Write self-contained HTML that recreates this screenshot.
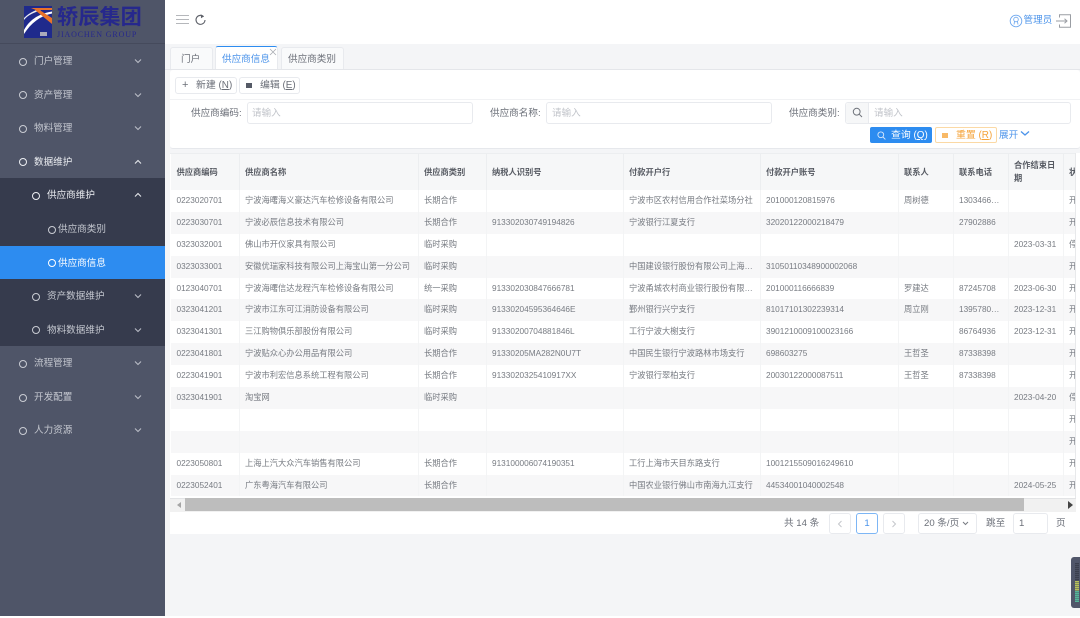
<!DOCTYPE html>
<html lang="zh"><head><meta charset="utf-8"><title>供应商信息</title>
<style>
*{box-sizing:border-box}
html,body{margin:0;padding:0;width:1080px;height:618px;overflow:hidden;background:#fff;font-family:"Liberation Sans","Noto Sans CJK SC",sans-serif}
.a{position:absolute}
#root{position:absolute;left:0;top:0;width:1080px;height:618px;overflow:hidden;background:#fff;filter:blur(.3px)}
#bg{position:absolute;left:165px;top:44px;width:915px;height:572px;background:#f4f5f7}
#side{position:absolute;left:0;top:0;width:165px;height:616px;background:#4f5568}
.mi{position:absolute;left:0;width:165px;height:33.6px;color:#c5c8d0;font-size:9.6px;line-height:33.6px;white-space:nowrap}
.mi i{position:absolute;top:12.5px;width:8px;height:8px;border:1.5px solid #c9ccd3;border-radius:50%}
.mi span{position:absolute;top:0}
.mi svg{position:absolute;left:134px;top:13px}
.l1 i{left:19px}.l1 span{left:34px}
.l2 i{left:32px}.l2 span{left:47px}
.l3 i{left:48px}.l3 span{left:58px}
.box{position:absolute;background:#fff;border:1px solid #e8eaee;border-radius:3px}
.lab{position:absolute;font-size:9.6px;color:#6b6f78;white-space:nowrap;line-height:14px}
.ph{position:absolute;font-size:9.6px;color:#c0c3c9;line-height:14px;white-space:nowrap}
table{position:absolute;left:1px;top:0;width:929px;border-collapse:collapse;table-layout:fixed;font-size:8.25px;color:#777b82}
th{height:36px;background:#f6f7f8;color:#565a62;font-weight:bold;text-align:left;padding:0 0 0 5.5px;border-right:1px solid #eceef0;line-height:13px;font-size:8.25px}
td{height:21.9px;padding:0 0 0 5.5px;border-right:1px solid #f3f4f5;white-space:nowrap;overflow:hidden;line-height:12px}
tr.s td{background:#f7f7f8}
</style></head><body>
<div id="root">
<div id="bg"></div>

<div id="side">
  <div class="a" style="left:0;top:43px;width:165px;height:1px;background:#454a5c"></div>
  <svg class="a" style="left:24px;top:6px" width="28" height="32" viewBox="0 0 28 32">
    <rect width="28" height="32" fill="#1f2a8c"/>
    <path d="M0 24C5 15 13 8 28 5.5L28 7.5C16 10 7 17 0 28Z" fill="#fff"/>
    <path d="M0 12C6 6 13 3 22 2L12 6C7 8 3 10 0 14Z" fill="#e8eaf2"/>
    <path d="M14 3L28 12V18L11 4Z" fill="#e8722a"/>
    <path d="M7 2H28V4H12Z" fill="#e8722a"/>
    <rect x="16" y="26" width="7" height="4" fill="#aab"/>
  </svg>
  <div class="a" style="left:57px;top:5px;font-size:21.2px;line-height:26px;color:#26288c;font-weight:bold;white-space:nowrap">轿辰集团</div>
  <div class="a" style="left:57px;top:29.5px;font-family:'Liberation Serif',serif;font-size:8px;line-height:9px;color:#26288c;white-space:nowrap;letter-spacing:.85px">JIAOCHEN GROUP</div>

  <div class="a" style="left:0;top:178px;width:165px;height:168px;background:#363b4d"></div>
  <div class="a" style="left:0;top:246px;width:165px;height:33px;background:#2d8cf0"></div>

  <div class="mi l1" style="top:45px"><i></i><span>门户管理</span><svg width="8" height="6" viewBox="0 0 8 6"><path d="M1 1.5L4 4.5L7 1.5" fill="none" stroke="#b9bcc6" stroke-width="1.1"/></svg></div>
  <div class="mi l1" style="top:78.5px"><i></i><span>资产管理</span><svg width="8" height="6" viewBox="0 0 8 6"><path d="M1 1.5L4 4.5L7 1.5" fill="none" stroke="#b9bcc6" stroke-width="1.1"/></svg></div>
  <div class="mi l1" style="top:112px"><i></i><span>物料管理</span><svg width="8" height="6" viewBox="0 0 8 6"><path d="M1 1.5L4 4.5L7 1.5" fill="none" stroke="#b9bcc6" stroke-width="1.1"/></svg></div>
  <div class="mi l1" style="top:145.5px;color:#eceef2"><i style="border-color:#eceef2"></i><span>数据维护</span><svg width="8" height="6" viewBox="0 0 8 6"><path d="M1 4.5L4 1.5L7 4.5" fill="none" stroke="#e6e8ec" stroke-width="1.1"/></svg></div>
  <div class="mi l2" style="top:179px;color:#eceef2"><i style="border-color:#eceef2"></i><span>供应商维护</span><svg width="8" height="6" viewBox="0 0 8 6"><path d="M1 4.5L4 1.5L7 4.5" fill="none" stroke="#e6e8ec" stroke-width="1.1"/></svg></div>
  <div class="mi l3" style="top:213px"><i></i><span>供应商类别</span></div>
  <div class="mi l3" style="top:246.5px;color:#fff"><i style="border-color:#fff"></i><span>供应商信息</span></div>
  <div class="mi l2" style="top:280px"><i></i><span>资产数据维护</span><svg width="8" height="6" viewBox="0 0 8 6"><path d="M1 1.5L4 4.5L7 1.5" fill="none" stroke="#b9bcc6" stroke-width="1.1"/></svg></div>
  <div class="mi l2" style="top:313.5px"><i></i><span>物料数据维护</span><svg width="8" height="6" viewBox="0 0 8 6"><path d="M1 1.5L4 4.5L7 1.5" fill="none" stroke="#b9bcc6" stroke-width="1.1"/></svg></div>
  <div class="mi l1" style="top:347px"><i></i><span>流程管理</span><svg width="8" height="6" viewBox="0 0 8 6"><path d="M1 1.5L4 4.5L7 1.5" fill="none" stroke="#b9bcc6" stroke-width="1.1"/></svg></div>
  <div class="mi l1" style="top:381px"><i></i><span>开发配置</span><svg width="8" height="6" viewBox="0 0 8 6"><path d="M1 1.5L4 4.5L7 1.5" fill="none" stroke="#b9bcc6" stroke-width="1.1"/></svg></div>
  <div class="mi l1" style="top:414px"><i></i><span>人力资源</span><svg width="8" height="6" viewBox="0 0 8 6"><path d="M1 1.5L4 4.5L7 1.5" fill="none" stroke="#b9bcc6" stroke-width="1.1"/></svg></div>
</div>

<!-- top bar -->
<svg class="a" style="left:176px;top:14px" width="13" height="11" viewBox="0 0 13 11"><path d="M0 1.5H13M0 5.5H13M0 9.5H13" stroke="#b5b7bb" stroke-width="1"/></svg>
<svg class="a" style="left:194px;top:13px" width="13" height="14" viewBox="0 0 13 14"><path d="M9.6 3.6A4.5 4.5 0 1 0 11 7" fill="none" stroke="#5d6068" stroke-width="1.1"/><path d="M6.8 1.2L10 3.4L7 5.2Z" fill="#5d6068"/></svg>
<svg class="a" style="left:1009px;top:14px" width="14" height="14" viewBox="0 0 14 14"><circle cx="7" cy="7" r="5.8" fill="none" stroke="#6aa5ee" stroke-width=".9"/><circle cx="7" cy="5.5" r="2.3" fill="none" stroke="#6aa5ee" stroke-width=".8"/><path d="M5.5 7.5L5 10.5M8.5 7.5L9 10.5" stroke="#6aa5ee" stroke-width=".8"/></svg>
<div class="a" style="left:1023.5px;top:14px;font-size:9.6px;line-height:14px;color:#4b93ea;white-space:nowrap">管理员</div>
<svg class="a" style="left:1056px;top:14px" width="16" height="14" viewBox="0 0 16 14"><path d="M3.5 3.5V.7H14.5V13.3H3.5V10.5" fill="none" stroke="#9a9da3" stroke-width="1"/><path d="M0 7H11M8.5 4.7L11 7L8.5 9.3" fill="none" stroke="#9a9da3" stroke-width="1"/></svg>

<!-- tabs -->
<div class="a" style="left:165px;top:68.5px;width:915px;height:1px;background:#e4e6ea"></div>
<div class="a" style="left:170px;top:47px;width:43px;height:22px;background:#f9fafb;border:1px solid #e8eaee;border-bottom:0;border-radius:3px 3px 0 0;font-size:9.6px;line-height:24px;color:#6b6f78;padding-left:10px">门户</div>
<div class="a" style="left:215px;top:46px;width:63px;height:23px;background:#fff;border:1px solid #e8eaee;border-top:1.5px solid #2d8cf0;border-bottom:0;border-radius:3px 3px 0 0;font-size:9.6px;line-height:25px;color:#4b93ea;padding-left:6px;white-space:nowrap">供应商信息</div>
<svg class="a" style="left:269px;top:47.5px" width="8" height="8" viewBox="0 0 8 8"><path d="M1 1L7 7M7 1L1 7" stroke="#a9acb2" stroke-width=".8"/></svg>
<div class="a" style="left:281px;top:47px;width:63px;height:22px;background:#f9fafb;border:1px solid #e8eaee;border-bottom:0;border-radius:3px 3px 0 0;font-size:9.6px;line-height:24px;color:#6b6f78;padding-left:6px;white-space:nowrap">供应商类别</div>

<!-- toolbar / form -->
<div class="a" style="left:170px;top:70px;width:910px;height:79px;background:#fff;border-radius:3px;border-bottom:1px solid #e6e8ec"></div>
<div class="a" style="left:170px;top:98.5px;width:910px;height:1px;background:#f1f2f4"></div>
<div class="box" style="left:175px;top:77px;width:62px;height:17px;font-size:9.9px;line-height:15px;color:#6b6f78;white-space:nowrap"><span class="a" style="left:6px;top:0;font-size:11px">+</span><span class="a" style="left:20px;top:0">新建 (<u>N</u>)</span></div>
<div class="box" style="left:239px;top:77px;width:61px;height:17px;font-size:9.9px;line-height:15px;color:#6b6f78;white-space:nowrap"><span class="a" style="left:6px;top:5px;width:6px;height:5px;background:#555a66"></span><span class="a" style="left:20px;top:0">编辑 (<u>E</u>)</span></div>

<div class="lab" style="left:191px;top:107px">供应商编码:</div>
<div class="box" style="left:247px;top:102px;width:226px;height:22px"></div>
<div class="ph" style="left:252px;top:107px">请输入</div>
<div class="lab" style="left:490px;top:107px">供应商名称:</div>
<div class="box" style="left:546px;top:102px;width:226px;height:22px"></div>
<div class="ph" style="left:552px;top:107px">请输入</div>
<div class="lab" style="left:789px;top:107px">供应商类别:</div>
<div class="box" style="left:845px;top:102px;width:226px;height:22px"></div>
<div class="a" style="left:846px;top:103px;width:23px;height:20px;background:#f6f7f8;border-right:1px solid #e8eaee;border-radius:3px 0 0 3px"></div>
<svg class="a" style="left:852px;top:107px" width="11" height="11" viewBox="0 0 11 11"><circle cx="4.7" cy="4.7" r="3.4" fill="none" stroke="#6f737b" stroke-width="1"/><path d="M7.2 7.2L10 10" stroke="#6f737b" stroke-width="1"/></svg>
<div class="ph" style="left:874px;top:107px">请输入</div>

<div class="a" style="left:870px;top:127px;width:62px;height:16px;background:#2d8cf0;border-radius:2px;color:#fff;font-size:9.9px;line-height:16px;white-space:nowrap"><svg class="a" style="left:7px;top:3.5px" width="9" height="9" viewBox="0 0 9 9"><circle cx="3.8" cy="3.8" r="2.9" fill="none" stroke="#d8e8fb" stroke-width=".9"/><path d="M6 6L8.4 8.4" stroke="#d8e8fb" stroke-width=".9"/></svg><span class="a" style="left:21px;top:1px">查询 (<u>Q</u>)</span></div>
<div class="a" style="left:935px;top:127px;width:62px;height:16px;background:#fff;border:1px solid #fbd9a5;border-radius:2px;color:#f5a43c;font-size:9.9px;line-height:14px;white-space:nowrap"><span class="a" style="left:6px;top:4.5px;width:6px;height:5px;background:#f8b967"></span><span class="a" style="left:20px;top:1px">重置 (<u>R</u>)</span></div>
<div class="a" style="left:999px;top:128px;font-size:9.6px;line-height:15px;color:#4b93ea;white-space:nowrap">展开</div>
<svg class="a" style="left:1020px;top:130px" width="10" height="7" viewBox="0 0 10 7"><path d="M1 1.5L5 5L9 1.5" fill="none" stroke="#4b93ea" stroke-width="1.3"/></svg>

<!-- table -->
<div class="a" style="left:170px;top:153px;width:910px;height:380px;background:#fff"></div>
<div class="a" style="left:170px;top:153px;width:906px;height:345px;overflow:hidden;border-top:1px solid #eceef0">
<table>
<colgroup><col style="width:68px"><col style="width:179px"><col style="width:68px"><col style="width:137px"><col style="width:137px"><col style="width:138px"><col style="width:55px"><col style="width:55px"><col style="width:55px"><col style="width:37px"></colgroup>
<tr><th>供应商编码</th><th>供应商名称</th><th>供应商类别</th><th>纳税人识别号</th><th>付款开户行</th><th>付款开户账号</th><th>联系人</th><th>联系电话</th><th>合作结束日期</th><th>状态</th></tr>
<tr><td>0223020701</td><td>宁波海曙海义豪达汽车检修设备有限公司</td><td>长期合作</td><td></td><td>宁波市区农村信用合作社菜场分社</td><td>201000120815976</td><td>周树德</td><td>1303466…</td><td></td><td>开启</td></tr>
<tr class="s"><td>0223030701</td><td>宁波必辰信息技术有限公司</td><td>长期合作</td><td>913302030749194826</td><td>宁波银行江夏支行</td><td>32020122000218479</td><td></td><td>27902886</td><td></td><td>开启</td></tr>
<tr><td>0323032001</td><td>佛山市开仪家具有限公司</td><td>临时采购</td><td></td><td></td><td></td><td></td><td></td><td>2023-03-31</td><td>停用</td></tr>
<tr class="s"><td>0323033001</td><td>安徽优瑞家科技有限公司上海宝山第一分公司</td><td>临时采购</td><td></td><td>中国建设银行股份有限公司上海…</td><td>31050110348900002068</td><td></td><td></td><td></td><td>开启</td></tr>
<tr><td>0123040701</td><td>宁波海曙信达龙程汽车检修设备有限公司</td><td>统一采购</td><td>913302030847666781</td><td>宁波甬城农村商业银行股份有限…</td><td>201000116666839</td><td>罗建达</td><td>87245708</td><td>2023-06-30</td><td>开启</td></tr>
<tr class="s"><td>0323041201</td><td>宁波市江东可江消防设备有限公司</td><td>临时采购</td><td>91330204595364646E</td><td>鄞州银行兴宁支行</td><td>81017101302239314</td><td>周立刚</td><td>1395780…</td><td>2023-12-31</td><td>开启</td></tr>
<tr><td>0323041301</td><td>三江购物俱乐部股份有限公司</td><td>临时采购</td><td>91330200704881846L</td><td>工行宁波大榭支行</td><td>3901210009100023166</td><td></td><td>86764936</td><td>2023-12-31</td><td>开启</td></tr>
<tr class="s"><td>0223041801</td><td>宁波贴众心办公用品有限公司</td><td>长期合作</td><td>91330205MA282N0U7T</td><td>中国民生银行宁波路林市场支行</td><td>698603275</td><td>王哲圣</td><td>87338398</td><td></td><td>开启</td></tr>
<tr><td>0223041901</td><td>宁波市利宏信息系统工程有限公司</td><td>长期合作</td><td>9133020325410917XX</td><td>宁波银行翠柏支行</td><td>20030122000087511</td><td>王哲圣</td><td>87338398</td><td></td><td>开启</td></tr>
<tr class="s"><td>0323041901</td><td>淘宝网</td><td>临时采购</td><td></td><td></td><td></td><td></td><td></td><td>2023-04-20</td><td>停用</td></tr>
<tr><td></td><td></td><td></td><td></td><td></td><td></td><td></td><td></td><td></td><td>开启</td></tr>
<tr class="s"><td></td><td></td><td></td><td></td><td></td><td></td><td></td><td></td><td></td><td>开启</td></tr>
<tr><td>0223050801</td><td>上海上汽大众汽车销售有限公司</td><td>长期合作</td><td>913100006074190351</td><td>工行上海市天目东路支行</td><td>1001215509016249610</td><td></td><td></td><td></td><td>开启</td></tr>
<tr class="s"><td>0223052401</td><td>广东粤海汽车有限公司</td><td>长期合作</td><td></td><td>中国农业银行佛山市南海九江支行</td><td>44534001040002548</td><td></td><td></td><td>2024-05-25</td><td>开启</td></tr>
</table>
</div>
<div class="a" style="left:1075px;top:153px;width:1px;height:359px;background:#e8e9eb"></div>
<!-- scrollbar -->
<div class="a" style="left:170px;top:498px;width:906px;height:14px;background:#f1f1f1;border-top:1px solid #e2e3e5"></div>
<div class="a" style="left:185px;top:498px;width:839px;height:13px;background:#bdbdbd"></div>
<svg class="a" style="left:177px;top:502px" width="5" height="6" viewBox="0 0 5 6"><path d="M4 0V6L0 3Z" fill="#a5a5a5"/></svg>
<svg class="a" style="left:1067px;top:501px" width="6" height="8" viewBox="0 0 6 8"><path d="M1 0V8L6 4Z" fill="#444"/></svg>

<!-- pagination -->
<div class="a" style="left:170px;top:512px;width:910px;height:22px;background:#fff"></div>
<div class="lab" style="left:784px;top:517px">共 14 条</div>
<div class="box" style="left:829px;top:513px;width:22px;height:21px"></div>
<svg class="a" style="left:837px;top:520px" width="6" height="8" viewBox="0 0 6 8"><path d="M4.5 1L1.5 4L4.5 7" fill="none" stroke="#c4c6cb" stroke-width="1"/></svg>
<div class="box" style="left:856px;top:513px;width:22px;height:21px;border-color:#7db6f5;color:#4b93ea;font-size:9.6px;line-height:20px;text-align:center">1</div>
<div class="box" style="left:883px;top:513px;width:22px;height:21px"></div>
<svg class="a" style="left:891px;top:520px" width="6" height="8" viewBox="0 0 6 8"><path d="M1.5 1L4.5 4L1.5 7" fill="none" stroke="#c4c6cb" stroke-width="1"/></svg>
<div class="box" style="left:918px;top:513px;width:59px;height:21px"></div>
<div class="lab" style="left:924px;top:517px">20 条/页</div>
<svg class="a" style="left:962px;top:521px" width="7" height="5" viewBox="0 0 7 5"><path d="M1 1L3.5 3.5L6 1" fill="none" stroke="#777b82" stroke-width="1"/></svg>
<div class="lab" style="left:986px;top:517px">跳至</div>
<div class="box" style="left:1013px;top:513px;width:35px;height:21px"></div>
<div class="lab" style="left:1019px;top:517px">1</div>
<div class="lab" style="left:1056px;top:517px">页</div>

<!-- widget -->
<div class="a" style="left:1071px;top:557px;width:9px;height:51px;background:#50566a;border-radius:3px 0 0 3px"></div>
<div class="a" style="left:1075px;top:563px;width:4px;height:18px;background:repeating-linear-gradient(#3a3f4e 0 1px,#4a4f60 1px 2px)"></div>
<div class="a" style="left:1075px;top:581px;width:4px;height:10px;background:repeating-linear-gradient(#b8c15a 0 1px,#7f8a5e 1px 2px)"></div>
<div class="a" style="left:1075px;top:591px;width:4px;height:11px;background:repeating-linear-gradient(#56b59a 0 1px,#4f8a84 1px 2px)"></div>
</div>
</body></html>
